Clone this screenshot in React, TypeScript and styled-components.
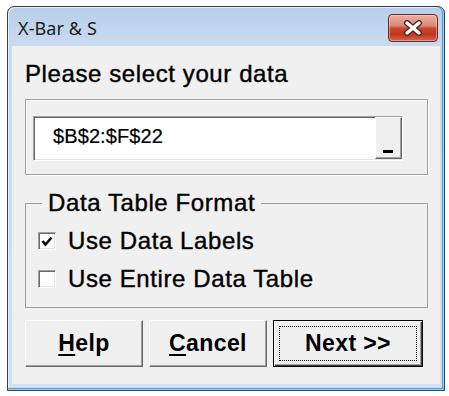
import React from 'react'
import styled, { createGlobalStyle } from 'styled-components'

const GlobalStyle = createGlobalStyle`
  html, body {
    margin: 0;
    background: #ffffff;
  }
  body {
    font-family: "Liberation Sans", Arial, sans-serif;
    color: #000000;
  }
`

const Page = styled.div`
  padding: 6px 0 0 7px;
`

const Window = styled.div`
  width: 438px;
  height: 385px;
  box-sizing: border-box;
  display: flex;
  flex-direction: column;
  border: 1px solid #3a3f47;
  border-radius: 7px 7px 0 0;
  overflow: hidden;
  background: linear-gradient(#b9cfe9, #c8daef 38px, #d2e1f2);
  box-shadow:
    inset 0 -1px 0 #a9d2f2,
    inset 0 -2px 0 #3d9be2,
    inset -1px 0 0 #a9d2f2,
    inset -2px 0 0 #3d9be2,
    inset 1px 1px 0 #e6eef8;
`

const TitleBar = styled.div`
  height: 39px;
  flex-shrink: 0;
  display: flex;
  justify-content: space-between;
  align-items: flex-start;
  padding: 7px 6px 0 10px;
  box-sizing: border-box;
`

const Title = styled.span`
  margin-top: 4px;
  font-family: "Noto Sans", "Open Sans", sans-serif;
  font-size: 18px;
  line-height: 20px;
  letter-spacing: 0.1px;
  color: #1c1c1c;
`

const CloseButton = styled.div`
  width: 50px;
  height: 28px;
  box-sizing: border-box;
  display: flex;
  align-items: center;
  justify-content: center;
  border: 1px solid #6a2c25;
  border-radius: 4px;
  background: linear-gradient(#eab0a2 0%, #dc8a77 40%, #c8452c 52%, #c0391f 75%, #d4664d 100%);
  box-shadow: inset 0 0 0 1px rgba(255, 220, 210, 0.45);
`

const Client = styled.div`
  flex: 1;
  margin: 0 4px 6px 4px;
  padding: 14px 12px 0 13px;
  display: flex;
  flex-direction: column;
  background: #f0f0f0;
`

const Heading = styled.div`
  margin: 0 0 11px;
  font-size: 24px;
  line-height: 28px;
  letter-spacing: 0.6px;
  -webkit-text-stroke: 0.4px #000000;
`

const RangeFrame = styled.div`
  padding: 16px 24px 13px 7px;
  border: 1px solid #a0a0a0;
  box-shadow: inset 1px 1px 0 #ffffff, 1px 1px 0 #ffffff;
`

const RangeField = styled.div`
  height: 45px;
  box-sizing: border-box;
  display: flex;
  background: #ffffff;
  border: 1px solid;
  border-color: #a0a0a0 #ffffff #ffffff #a0a0a0;
  box-shadow: inset 1px 1px 0 #696969, inset -1px -1px 0 #e3e3e3;
`

const RangeText = styled.div`
  flex: 1;
  display: flex;
  align-items: center;
  padding: 0 0 4px 19px;
  font-size: 20px;
  letter-spacing: 0.1px;
  -webkit-text-stroke: 0.2px #000000;
`

const PickerButton = styled.div`
  width: 27px;
  margin: 0 0 1px;
  box-sizing: border-box;
  display: flex;
  align-items: flex-end;
  justify-content: center;
  padding: 0 1px 5px 0;
  background: #f0f0f0;
  border: 1px solid;
  border-color: #ffffff #696969 #696969 #ffffff;
  box-shadow: inset -1px -1px 0 #a0a0a0;
`

const PickerBar = styled.div`
  width: 10px;
  height: 3px;
  background: #000000;
`

const Group = styled.fieldset`
  margin: 14px 0 0;
  padding: 0;
  min-width: 0;
  border: 1px solid #a0a0a0;
`

const Legend = styled.legend`
  margin-left: 16px;
  padding: 0 6px;
  font-size: 24px;
  line-height: 28px;
  letter-spacing: 0.6px;
  -webkit-text-stroke: 0.4px #000000;
`

const Options = styled.div`
  display: flex;
  flex-direction: column;
  gap: 10px;
  padding: 10px 0 14px 12px;
`

const OptionRow = styled.label`
  height: 28px;
  display: flex;
  align-items: center;
  gap: 12px;
  font-size: 24px;
  letter-spacing: 0.6px;
  -webkit-text-stroke: 0.4px #000000;
`

const CheckBox = styled.span`
  width: 18px;
  height: 18px;
  flex-shrink: 0;
  box-sizing: border-box;
  display: flex;
  align-items: center;
  justify-content: center;
  background: #ffffff;
  border: 1px solid;
  border-color: #a0a0a0 #ffffff #ffffff #a0a0a0;
  box-shadow: inset 1px 1px 0 #696969, inset -1px -1px 0 #e3e3e3;
`

const ButtonRow = styled.div`
  display: flex;
  gap: 6px;
  margin-top: 12px;
`

const Button = styled.div<{ $width: number; $default?: boolean }>`
  width: ${p => p.$width}px;
  height: 47px;
  box-sizing: border-box;
  display: flex;
  align-items: center;
  justify-content: center;
  padding: ${p => (p.$default ? '5px' : '0')};
  background: #f0f0f0;
  font-size: 23px;
  font-weight: 700;
  letter-spacing: 0.4px;
  border: 1px solid;
  border-color: ${p => (p.$default ? '#000000' : '#ffffff #696969 #696969 #ffffff')};
  box-shadow: ${p =>
    p.$default
      ? 'inset 1px 1px 0 #ffffff, inset -1px -1px 0 #404040, inset -2px -2px 0 #a0a0a0'
      : 'inset -1px -1px 0 #a0a0a0'};
`

const FocusRect = styled.div`
  flex: 1;
  align-self: stretch;
  display: flex;
  align-items: center;
  justify-content: center;
  border: 1px dotted #000000;
`

const AccessKey = styled.u`
  text-decoration-thickness: 2px;
  text-underline-offset: 3px;
`

const CloseGlyph = () => (
  <svg width="20" height="16" viewBox="0 0 20 16">
    <path d="M4 3 L16 13 M16 3 L4 13" stroke="#4d231f" strokeWidth="6" strokeLinecap="round" />
    <path d="M4 3 L16 13 M16 3 L4 13" stroke="#ffffff" strokeWidth="3.4" strokeLinecap="round" />
  </svg>
)

const Check = () => (
  <svg width="12" height="11" viewBox="0 0 12 11">
    <path d="M1.5 5 L4.5 8.5 L10.5 1.5" fill="none" stroke="#000000" strokeWidth="2.5" />
  </svg>
)

export default function App() {
  const options = [
    { label: 'Use Data Labels', checked: true },
    { label: 'Use Entire Data Table', checked: false },
  ]

  return (
    <Page>
      <GlobalStyle />
      <Window>
        <TitleBar>
          <Title>X-Bar &amp; S</Title>
          <CloseButton>
            <CloseGlyph />
          </CloseButton>
        </TitleBar>
        <Client>
          <Heading>Please select your data</Heading>
          <RangeFrame>
            <RangeField>
              <RangeText>$B$2:$F$22</RangeText>
              <PickerButton>
                <PickerBar />
              </PickerButton>
            </RangeField>
          </RangeFrame>
          <Group>
            <Legend>Data Table Format</Legend>
            <Options>
              {options.map(o => (
                <OptionRow key={o.label}>
                  <CheckBox>{o.checked && <Check />}</CheckBox>
                  {o.label}
                </OptionRow>
              ))}
            </Options>
          </Group>
          <ButtonRow>
            <Button $width={118}>
              <span><AccessKey>H</AccessKey>elp</span>
            </Button>
            <Button $width={118}>
              <span><AccessKey>C</AccessKey>ancel</span>
            </Button>
            <Button $width={150} $default>
              <FocusRect>Next &gt;&gt;</FocusRect>
            </Button>
          </ButtonRow>
        </Client>
      </Window>
    </Page>
  )
}
